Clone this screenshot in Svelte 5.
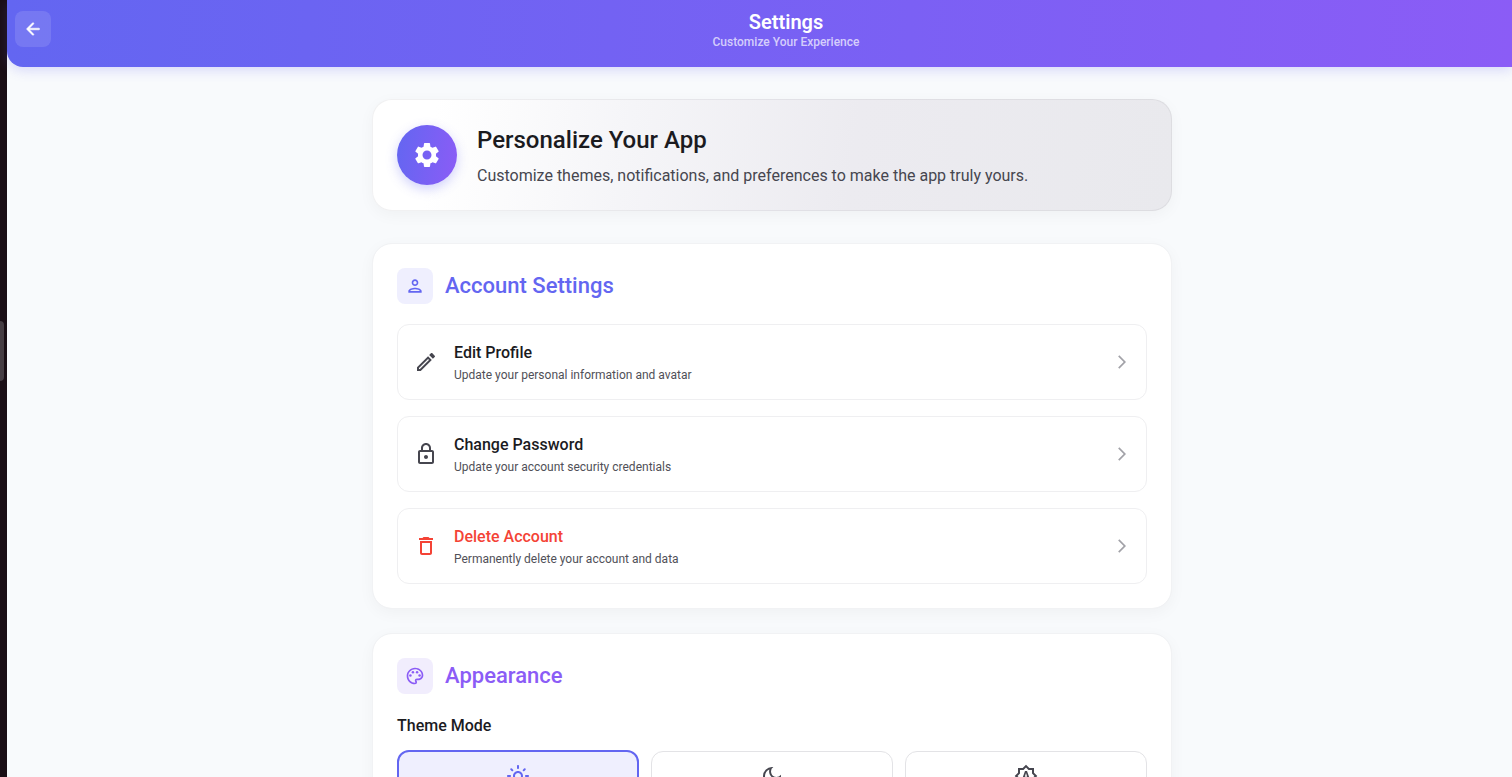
<script>
  const accountItems = [
    {
      id: 'edit',
      title: 'Edit Profile',
      detail: 'Update your personal information and avatar',
      path: 'M14.06 9.02l.92.92L5.92 19H5v-.92l9.06-9.06M17.66 3c-.25 0-.51.1-.7.29l-1.83 1.83 3.75 3.75 1.83-1.83a.996.996 0 0 0 0-1.41l-2.34-2.34c-.2-.2-.45-.29-.71-.29zm-3.6 3.19L3 17.25V21h3.75L17.81 9.94l-3.75-3.75z'
    },
    {
      id: 'password',
      title: 'Change Password',
      detail: 'Update your account security credentials',
      path: 'M18 8h-1V6c0-2.76-2.24-5-5-5S7 3.24 7 6v2H6c-1.1 0-2 .9-2 2v10c0 1.1.9 2 2 2h12c1.1 0 2-.9 2-2V10c0-1.1-.9-2-2-2zM9 6c0-1.66 1.34-3 3-3s3 1.34 3 3v2H9V6zm9 14H6V10h12v10zm-6-3c1.1 0 2-.9 2-2s-.9-2-2-2-2 .9-2 2 .9 2 2 2z'
    },
    {
      id: 'delete',
      title: 'Delete Account',
      detail: 'Permanently delete your account and data',
      danger: true,
      path: 'M6 19c0 1.1.9 2 2 2h8c1.1 0 2-.9 2-2V7H6v12zM8 9h8v10H8V9zm7.5-5l-1-1h-5l-1 1H5v2h14V4h-3.5z'
    }
  ];

  const themes = [
    {
      id: 'light',
      path: 'M12 9c1.65 0 3 1.35 3 3s-1.35 3-3 3-3-1.35-3-3 1.35-3 3-3m0-2c-2.76 0-5 2.24-5 5s2.24 5 5 5 5-2.24 5-5-2.24-5-5-5zM2 13h2c.55 0 1-.45 1-1s-.45-1-1-1H2c-.55 0-1 .45-1 1s.45 1 1 1zm18 0h2c.55 0 1-.45 1-1s-.45-1-1-1h-2c-.55 0-1 .45-1 1s.45 1 1 1zM11 2v2c0 .55.45 1 1 1s1-.45 1-1V2c0-.55-.45-1-1-1s-1 .45-1 1zm0 18v2c0 .55.45 1 1 1s1-.45 1-1v-2c0-.55-.45-1-1-1s-1 .45-1 1zM5.99 4.58a.996.996 0 0 0-1.41 0 .996.996 0 0 0 0 1.41l1.06 1.06c.39.39 1.03.39 1.41 0s.39-1.03 0-1.41L5.99 4.58zm12.37 12.37a.996.996 0 0 0-1.41 0 .996.996 0 0 0 0 1.41l1.06 1.06c.39.39 1.03.39 1.41 0a.996.996 0 0 0 0-1.41l-1.06-1.06zm1.06-10.96a.996.996 0 0 0 0-1.41.996.996 0 0 0-1.41 0l-1.06 1.06c-.39.39-.39 1.03 0 1.41s1.03.39 1.41 0l1.06-1.06zM7.05 18.36a.996.996 0 0 0 0-1.41.996.996 0 0 0-1.41 0l-1.06 1.06c-.39.39-.39 1.03 0 1.41s1.03.39 1.41 0l1.06-1.06z'
    },
    {
      id: 'dark',
      path: 'M9.37 5.51c-.18.64-.27 1.31-.27 1.99 0 4.08 3.32 7.4 7.4 7.4.68 0 1.35-.09 1.99-.27A7.014 7.014 0 0 1 12 19c-3.86 0-7-3.14-7-7 0-2.93 1.81-5.45 4.37-6.49zM12 3a9 9 0 1 0 9 9c0-.46-.04-.92-.1-1.36a5.389 5.389 0 0 1-4.4 2.26 5.403 5.403 0 0 1-3.14-9.8c-.44-.06-.9-.1-1.36-.1z'
    },
    {
      id: 'auto',
      path: 'M11 7l-3.2 9h1.9l.7-2h3.2l.7 2h1.9L13 7h-2zm-.15 5.65L12 9l1.15 3.65h-2.3zM20 8.69V4h-4.69L12 .69 8.69 4H4v4.69L.69 12 4 15.31V20h4.69L12 23.31 15.31 20H20v-4.69L23.31 12 20 8.69zm-2 5.79V18h-3.52L12 20.48 9.52 18H6v-3.52L3.52 12 6 9.52V6h3.52L12 3.52 14.48 6H18v3.52L20.48 12 18 14.48z'
    }
  ];

  let theme = $state('light');
</script>

<div class="shell">
  <aside class="rail"><span class="handle"></span></aside>

  <div class="page">
    <header class="topbar">
      <button class="back" type="button" aria-label="Back">
        <svg class="icon small" viewBox="0 0 24 24" aria-hidden="true">
          <path d="M19 11H7.83l4.88-4.88c.39-.39.39-1.03 0-1.42a.996.996 0 0 0-1.41 0l-6.59 6.59a.996.996 0 0 0 0 1.41l6.59 6.59a.996.996 0 1 0 1.41-1.41L7.83 13H19c.55 0 1-.45 1-1s-.45-1-1-1z" />
        </svg>
      </button>
      <div class="heading">
        <h1>Settings</h1>
        <p>Customize Your Experience</p>
      </div>
    </header>

    <main class="content">
      <section class="card hero">
        <div class="medal">
          <svg viewBox="0 0 24 24" aria-hidden="true">
            <path d="M19.14 12.94c.04-.3.06-.61.06-.94 0-.32-.02-.64-.07-.94l2.03-1.58a.49.49 0 0 0 .12-.61l-1.92-3.32a.488.488 0 0 0-.59-.22l-2.39.96c-.5-.38-1.03-.7-1.62-.94l-.36-2.54a.484.484 0 0 0-.48-.41h-3.84c-.24 0-.43.17-.47.41l-.36 2.54c-.59.24-1.13.57-1.62.94l-2.39-.96c-.22-.08-.47 0-.59.22L2.74 8.87c-.12.21-.08.47.12.61l2.03 1.58c-.05.3-.09.63-.09.94s.02.64.07.94l-2.03 1.58a.49.49 0 0 0-.12.61l1.92 3.32c.12.22.37.29.59.22l2.39-.96c.5.38 1.03.7 1.62.94l.36 2.54c.05.24.24.41.48.41h3.84c.24 0 .44-.17.47-.41l.36-2.54c.59-.24 1.13-.56 1.62-.94l2.39.96c.22.08.47 0 .59-.22l1.92-3.32c.12-.22.07-.47-.12-.61l-2.01-1.58zM12 15.6c-1.98 0-3.6-1.62-3.6-3.6s1.62-3.6 3.6-3.6 3.6 1.62 3.6 3.6-1.62 3.6-3.6 3.6z" />
          </svg>
        </div>
        <div class="hero-text">
          <h2>Personalize Your App</h2>
          <p>Customize themes, notifications, and preferences to make the app truly yours.</p>
        </div>
      </section>

      <section class="card account">
        <div class="section-head">
          <span class="badge">
            <svg class="icon small" viewBox="0 0 24 24" aria-hidden="true">
              <path d="M12 6c1.1 0 2 .9 2 2s-.9 2-2 2-2-.9-2-2 .9-2 2-2m0 10c2.7 0 5.8 1.29 6 2H6c.23-.72 3.31-2 6-2m0-12C9.79 4 8 5.79 8 8s1.79 4 4 4 4-1.79 4-4-1.79-4-4-4zm0 10c-2.67 0-8 1.34-8 4v2h16v-2c0-2.66-5.33-4-8-4z" />
            </svg>
          </span>
          <h2>Account Settings</h2>
        </div>
        <div class="rows">
          {#each accountItems as item (item.id)}
            <button class="row" class:danger={item.danger} type="button">
              <svg class="icon" viewBox="0 0 24 24" aria-hidden="true"><path d={item.path} /></svg>
              <span class="row-text">
                <span class="row-title">{item.title}</span>
                <span class="row-detail">{item.detail}</span>
              </span>
              <svg class="chevron" viewBox="0 0 24 24" aria-hidden="true">
                <path d="M6.23 20.23L8 22l10-10L8 2 6.23 3.77 14.46 12z" />
              </svg>
            </button>
          {/each}
        </div>
      </section>

      <section class="card appearance">
        <div class="section-head">
          <span class="badge">
            <svg class="icon small" viewBox="0 0 24 24" aria-hidden="true">
              <path d="M12 22C6.49 22 2 17.51 2 12S6.49 2 12 2s10 4.04 10 9c0 3.31-2.69 6-6 6h-1.77c-.28 0-.5.22-.5.5 0 .12.05.23.13.33.41.47.64 1.06.64 1.67A2.5 2.5 0 0 1 12 22zm0-18c-4.41 0-8 3.59-8 8s3.59 8 8 8c.28 0 .5-.22.5-.5a.54.54 0 0 0-.14-.35c-.41-.46-.63-1.05-.63-1.65a2.5 2.5 0 0 1 2.5-2.5H16c2.21 0 4-1.79 4-4 0-3.86-3.59-7-8-7z" />
              <circle cx="6.5" cy="11.5" r="1.5" />
              <circle cx="9.5" cy="7.5" r="1.5" />
              <circle cx="14.5" cy="7.5" r="1.5" />
              <circle cx="17.5" cy="11.5" r="1.5" />
            </svg>
          </span>
          <h2>Appearance</h2>
        </div>
        <h3 id="theme-mode">Theme Mode</h3>
        <div class="themes" role="group" aria-labelledby="theme-mode">
          {#each themes as option (option.id)}
            <button
              class="theme"
              class:selected={theme === option.id}
              type="button"
              aria-label={option.id}
              aria-pressed={theme === option.id}
              onclick={() => (theme = option.id)}
            >
              <svg class="icon" viewBox="0 0 24 24" aria-hidden="true"><path d={option.path} /></svg>
            </button>
          {/each}
        </div>
      </section>
    </main>
  </div>
</div>

<style>
  :global(body) {
    margin: 0;
    background: #f8fafc;
  }

  .shell {
    display: flex;
    height: 100vh;
    overflow: hidden;
    color: #1b1b1f;
    font-family: Roboto, sans-serif;
  }

  h1,
  h2,
  h3,
  p {
    margin: 0;
  }

  button {
    box-sizing: border-box;
    font-family: inherit;
    cursor: pointer;
  }

  svg {
    display: block;
    flex: none;
    fill: currentColor;
  }

  .icon {
    width: 24px;
    height: 24px;
  }

  .icon.small {
    width: 20px;
    height: 20px;
  }

  .rail {
    display: flex;
    flex: none;
    align-items: center;
    width: 7px;
    background: #1a0e15;
  }

  .handle {
    width: 4px;
    height: 60px;
    margin-bottom: 76px;
    border-radius: 0 6px 6px 0;
    background: #463d43;
  }

  .page {
    flex: 1;
    min-width: 0;
    background: #f8fafc;
  }

  .topbar {
    display: flex;
    align-items: center;
    gap: 9px;
    padding: 9px 0 18px 8px;
    border-bottom-left-radius: 16px;
    background: linear-gradient(92deg, #6366f1, #8b5cf6);
    box-shadow: 0 4px 12px rgba(99, 102, 241, 0.2);
    color: #fff;
  }

  .back {
    display: grid;
    place-items: center;
    width: 36px;
    height: 36px;
    padding: 0;
    border: 0;
    border-radius: 8px;
    background: rgba(255, 255, 255, 0.12);
    color: #fff;
  }

  .back svg {
    stroke: currentColor;
    stroke-width: 0.6;
  }

  .heading {
    flex: 1;
    text-align: center;
  }

  h1 {
    font-size: 20px;
    font-weight: 600;
    line-height: 26px;
  }

  .heading p {
    color: rgba(255, 255, 255, 0.7);
    font-size: 12px;
    font-weight: 500;
    line-height: 14px;
  }

  .content {
    display: flex;
    flex-direction: column;
    align-items: center;
    gap: 24px;
    padding: 32px 0 32px 25px;
  }

  .card {
    box-sizing: border-box;
    width: 100%;
    max-width: 800px;
    padding: 24px;
    border: 1px solid #f1f2f4;
    border-radius: 20px;
    background: #fff;
    background-clip: padding-box;
    box-shadow: 0 4px 16px rgba(0, 0, 0, 0.04);
  }

  .hero {
    display: flex;
    align-items: center;
    gap: 20px;
    margin-bottom: 8px;
    border-color: rgba(120, 120, 130, 0.1);
    background: linear-gradient(98deg, #fff 8%, #f5f5f8 32%, #ecebf0 60%, #e9e9ed 100%) border-box;
  }

  .medal {
    display: grid;
    flex: none;
    place-items: center;
    width: 60px;
    height: 60px;
    border-radius: 50%;
    background: linear-gradient(98deg, #6366f1, #8b5cf6);
    box-shadow: 0 4px 12px rgba(99, 102, 241, 0.3);
    color: #fff;
  }

  .medal svg {
    width: 30px;
    height: 30px;
  }

  .hero-text {
    display: grid;
    gap: 10px;
  }

  .hero-text h2 {
    font-size: 24px;
    font-weight: 500;
    line-height: 32px;
  }

  .hero-text p {
    color: #46464f;
    font-size: 16px;
    line-height: 20px;
  }

  .account {
    --accent: #6366f1;
    --tint: #efeffe;
  }

  .appearance {
    --accent: #8b5cf6;
    --tint: #f1edfd;
  }

  .section-head {
    display: flex;
    align-items: center;
    gap: 12px;
    margin-bottom: 20px;
    color: var(--accent);
  }

  .badge {
    display: grid;
    place-items: center;
    width: 36px;
    height: 36px;
    border-radius: 8px;
    background: var(--tint);
  }

  .section-head h2 {
    font-size: 22px;
    font-weight: 500;
    line-height: 28px;
  }

  .rows {
    display: grid;
    gap: 16px;
  }

  .row {
    display: flex;
    align-items: center;
    gap: 16px;
    padding: 16px;
    border: 1px solid #efeff1;
    border-radius: 12px;
    background: #fff;
    color: #46464f;
    text-align: left;
  }

  .row-text {
    display: grid;
    flex: 1;
    gap: 2px;
  }

  .row-title {
    color: #1b1b1f;
    font-size: 16px;
    font-weight: 500;
    line-height: 24px;
  }

  .row-detail {
    color: #505058;
    font-size: 12px;
    line-height: 16px;
  }

  .danger .icon,
  .danger .row-title {
    color: #f44336;
  }

  .chevron {
    width: 16px;
    height: 16px;
    color: #a2a2a8;
  }

  h3 {
    margin-bottom: 12px;
    font-size: 16px;
    font-weight: 500;
    line-height: 24px;
  }

  .themes {
    display: grid;
    grid-template-columns: repeat(3, 1fr);
    align-items: center;
    gap: 12px;
  }

  .theme {
    display: flex;
    justify-content: center;
    padding: 12px 12px 36px;
    border: 1px solid #e3e3e6;
    border-radius: 12px;
    background: #fff;
    color: #46464f;
  }

  .theme.selected {
    border: 2px solid #6366f1;
    background: #efeffe;
    color: #6366f1;
  }
</style>
